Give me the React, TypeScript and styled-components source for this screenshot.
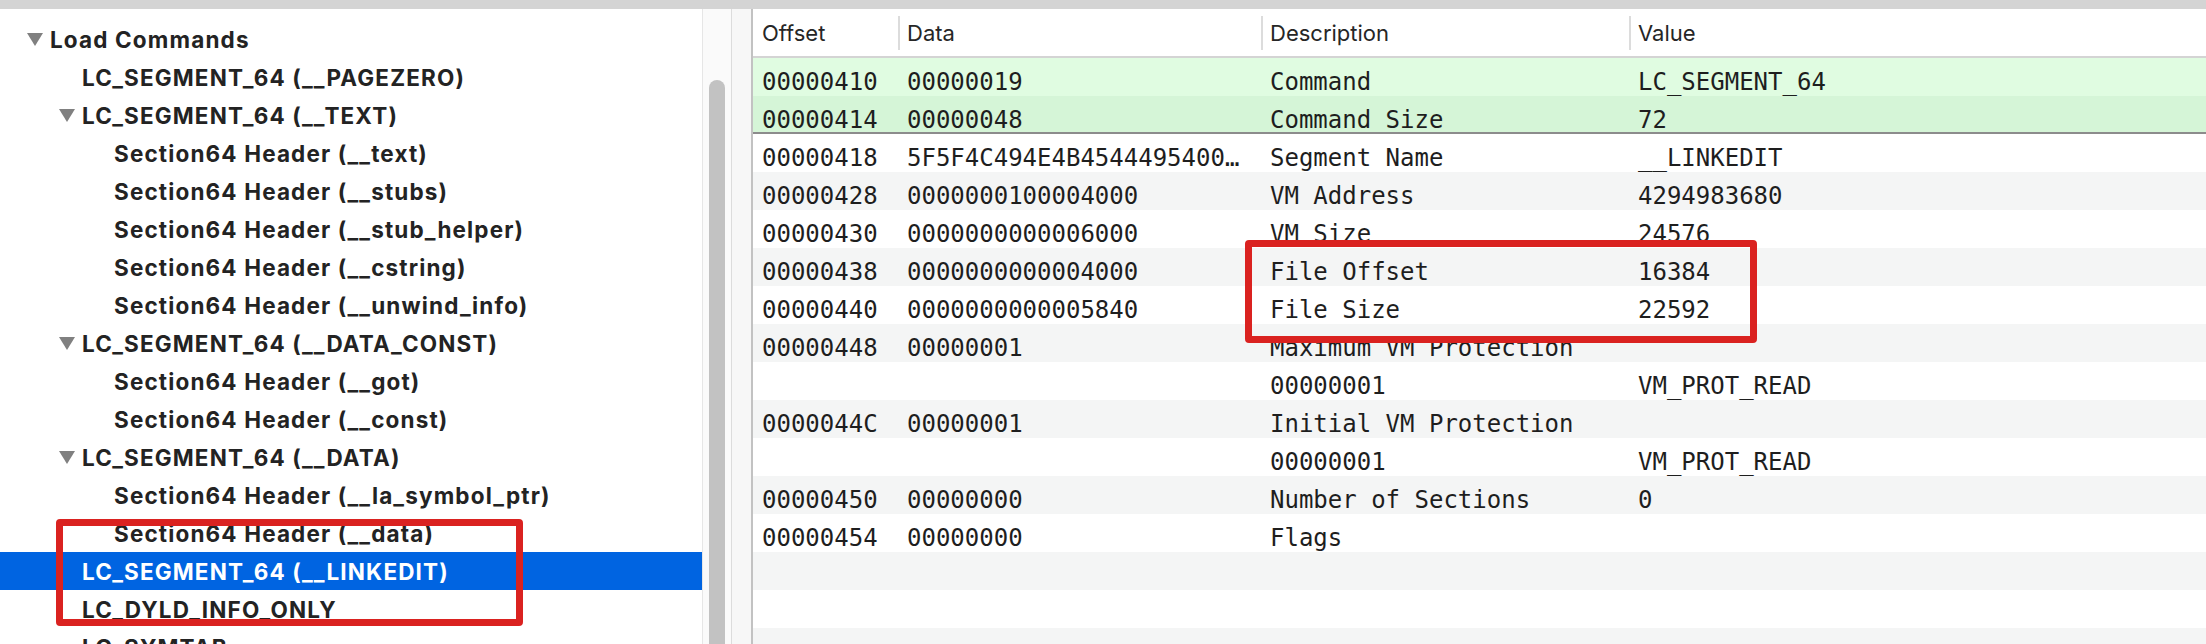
import React from "react";
import styled, { createGlobalStyle } from "styled-components";

const Global = createGlobalStyle`
  html, body { margin: 0; padding: 0; background: #ffffff; }
  body { overflow: hidden; }
  * { box-sizing: border-box; }
`;

const Window = styled.div`
  position: relative;
  width: 2206px;
  height: 644px;
  display: flex;
  flex-direction: column;
  overflow: hidden;
  background: #ffffff;
`;

const TopBar = styled.div`
  height: 9px;
  flex: none;
  background: #d4d4d4;
`;

const Body = styled.div`
  flex: 1;
  display: flex;
  min-height: 0;
`;

const TreePane = styled.div`
  width: 702px;
  flex: none;
  background: #ffffff;
  padding-top: 11px;
  overflow: hidden;
  font-family: Inter, "Liberation Sans", sans-serif;
  font-weight: 700;
  font-size: 22.5px;
  color: #232323;
`;

const TreeRow = styled.div<{ $level: number; $selected?: boolean }>`
  height: 38px;
  display: flex;
  align-items: center;
  padding-left: ${(p) => 27 + p.$level * 32}px;
  background: ${(p) => (p.$selected ? "#0064e1" : "transparent")};
  color: ${(p) => (p.$selected ? "#ffffff" : "#232323")};
  white-space: nowrap;
`;

const Toggle = styled.span`
  width: 23px;
  flex: none;
  display: flex;
  align-items: center;
`;

const Label = styled.span`
  letter-spacing: 1.15px;
`;

const ScrollTrack = styled.div`
  width: 30px;
  flex: none;
  background: #fafafa;
  border-left: 1px solid #e6e6e6;
  border-right: 1px solid #dcdcdc;
  display: flex;
  flex-direction: column;
  padding: 71px 0 0 6px;
`;

const Thumb = styled.div`
  width: 16px;
  flex: 1;
  border-radius: 8px 8px 0 0;
  background: #c2c2c2;
`;

const Gutter = styled.div`
  width: 21px;
  flex: none;
  background: #f7f7f7;
  border-right: 2px solid #c2c2c2;
`;

const TablePane = styled.div`
  flex: 1;
  display: flex;
  flex-direction: column;
  overflow: hidden;
`;

const cols = "145px 363px 368px 1fr";

const HeaderRow = styled.div`
  height: 49px;
  flex: none;
  display: grid;
  grid-template-columns: ${cols};
  border-bottom: 2px solid #d4d4d4;
  font-family: Inter, "Liberation Sans", sans-serif;
  font-size: 22px;
  color: #262626;
`;

const HeaderCell = styled.div<{ $first?: boolean }>`
  display: flex;
  align-items: center;
  padding-left: ${(p) => (p.$first ? 9 : 0)}px;
  gap: 7px;
`;

const Sep = styled.span`
  width: 2px;
  height: 34px;
  background: #dcdcdc;
  flex: none;
`;

type Tone = "green" | "plain";

const DataRow = styled.div<{ $odd: boolean; $tone: Tone; $rule?: boolean }>`
  height: 38px;
  flex: none;
  display: grid;
  grid-template-columns: ${cols};
  background: ${(p) =>
    p.$tone === "green"
      ? p.$odd
        ? "#d5f5d7"
        : "#e0fce1"
      : p.$odd
      ? "#f4f5f5"
      : "#ffffff"};
  border-bottom: ${(p) => (p.$rule ? "2px solid #8c8c8c" : "none")};
  font-family: "DejaVu Sans Mono", "Liberation Mono", monospace;
  font-size: 24px;
  color: #1e1e1e;
`;

const Cell = styled.div`
  padding: 10px 8px 0 9px;
  line-height: 28px;
  white-space: nowrap;
  overflow: hidden;
  text-overflow: ellipsis;
`;

const WideCell = styled(Cell)`
  overflow: visible;
`;

const Callout = styled.div<{ $x: number; $y: number; $w: number; $h: number }>`
  position: absolute;
  left: ${(p) => p.$x}px;
  top: ${(p) => p.$y}px;
  width: ${(p) => p.$w}px;
  height: ${(p) => p.$h}px;
  border: 7px solid #da2220;
  border-radius: 4px;
  pointer-events: none;
`;

const Triangle = () => (
  <svg width="16" height="13" viewBox="0 0 16 13">
    <polygon points="0,0 16,0 8,13" fill="#808080" />
  </svg>
);

type TreeItem = { level: number; text: string; open?: boolean; selected?: boolean };

const tree: TreeItem[] = [
  { level: 0, text: "Load Commands", open: true },
  { level: 1, text: "LC_SEGMENT_64 (__PAGEZERO)" },
  { level: 1, text: "LC_SEGMENT_64 (__TEXT)", open: true },
  { level: 2, text: "Section64 Header (__text)" },
  { level: 2, text: "Section64 Header (__stubs)" },
  { level: 2, text: "Section64 Header (__stub_helper)" },
  { level: 2, text: "Section64 Header (__cstring)" },
  { level: 2, text: "Section64 Header (__unwind_info)" },
  { level: 1, text: "LC_SEGMENT_64 (__DATA_CONST)", open: true },
  { level: 2, text: "Section64 Header (__got)" },
  { level: 2, text: "Section64 Header (__const)" },
  { level: 1, text: "LC_SEGMENT_64 (__DATA)", open: true },
  { level: 2, text: "Section64 Header (__la_symbol_ptr)" },
  { level: 2, text: "Section64 Header (__data)" },
  { level: 1, text: "LC_SEGMENT_64 (__LINKEDIT)", selected: true },
  { level: 1, text: "LC_DYLD_INFO_ONLY" },
  { level: 1, text: "LC_SYMTAB" },
];

type Row = [string, string, string, string];

const rows: Row[] = [
  ["00000410", "00000019", "Command", "LC_SEGMENT_64"],
  ["00000414", "00000048", "Command Size", "72"],
  ["00000418", "5F5F4C494E4B45444954000000000000", "Segment Name", "__LINKEDIT"],
  ["00000428", "0000000100004000", "VM Address", "4294983680"],
  ["00000430", "0000000000006000", "VM Size", "24576"],
  ["00000438", "0000000000004000", "File Offset", "16384"],
  ["00000440", "0000000000005840", "File Size", "22592"],
  ["00000448", "00000001", "Maximum VM Protection", ""],
  ["", "", "00000001", "VM_PROT_READ"],
  ["0000044C", "00000001", "Initial VM Protection", ""],
  ["", "", "00000001", "VM_PROT_READ"],
  ["00000450", "00000000", "Number of Sections", "0"],
  ["00000454", "00000000", "Flags", ""],
  ["", "", "", ""],
  ["", "", "", ""],
  ["", "", "", ""],
];

export default function App() {
  return (
    <Window>
      <Global />
      <TopBar />
      <Body>
        <TreePane>
          {tree.map((t, i) => (
            <TreeRow key={i} $level={t.level} $selected={t.selected}>
              <Toggle>{t.open ? <Triangle /> : null}</Toggle>
              <Label>{t.text}</Label>
            </TreeRow>
          ))}
        </TreePane>
        <ScrollTrack>
          <Thumb />
        </ScrollTrack>
        <Gutter />
        <TablePane>
          <HeaderRow>
            <HeaderCell $first>Offset</HeaderCell>
            <HeaderCell>
              <Sep />
              Data
            </HeaderCell>
            <HeaderCell>
              <Sep />
              Description
            </HeaderCell>
            <HeaderCell>
              <Sep />
              Value
            </HeaderCell>
          </HeaderRow>
          {rows.map((r, i) => (
            <DataRow key={i} $odd={i % 2 === 1} $tone={i < 2 ? "green" : "plain"} $rule={i === 1}>
              <Cell>{r[0]}</Cell>
              <Cell>{r[1]}</Cell>
              <WideCell>{r[2]}</WideCell>
              <Cell>{r[3]}</Cell>
            </DataRow>
          ))}
        </TablePane>
      </Body>
      <Callout $x={56} $y={519} $w={467} $h={107} />
      <Callout $x={1245} $y={240} $w={512} $h={103} />
    </Window>
  );
}
